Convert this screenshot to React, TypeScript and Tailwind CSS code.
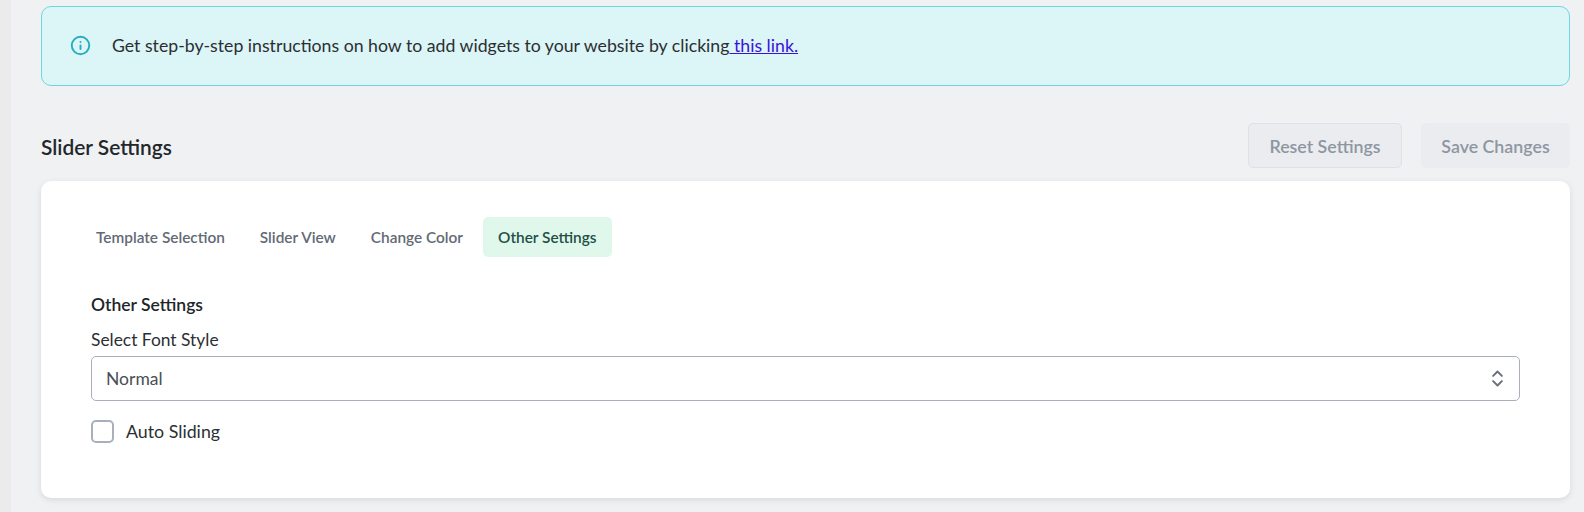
import { ChevronsUpDown, Info } from "lucide-react";

const tabs = ["Template Selection", "Slider View", "Change Color", "Other Settings"];

function App() {
  return (
    <div className="flex h-[512px] overflow-hidden bg-[#f0f1f3] font-['Lato',sans-serif] text-[#212529]">
      <div className="w-[11px] shrink-0 bg-[#ebebeb]" />
      <div className="flex-1 pl-[30px] pr-[14px] pt-[6px]">
        <div className="flex h-[80px] items-center rounded-[10px] border border-[#6dd6e2] bg-[#dcf5f7] pl-[28px]">
          <Info className="-mt-[2px] h-[21px] w-[21px] text-[#25adc0]" strokeWidth={2.2} />
          <p className="ml-[21px] text-[17.7px] text-[#2b2f33]">
            Get step-by-step instructions on how to add widgets to your website by clicking
            <a className="text-[#3a12d8] underline"> this link.</a>
          </p>
        </div>

        <div className="mt-[37px] flex h-[45px] items-center justify-between">
          <h2 className="pt-[3px] text-[20.9px] font-semibold text-[#23272b]">Slider Settings</h2>
          <div className="flex gap-[19px]">
            <button className="h-[45px] w-[154px] rounded-[5px] border border-[#dfe1e5] bg-[#ebecf0] pt-[2px] text-[17.8px] font-semibold text-[#8d96a1]">
              Reset Settings
            </button>
            <button className="h-[45px] w-[149px] rounded-[5px] bg-[#ebecf0] pt-[2px] text-[17.8px] font-semibold text-[#8d96a1]">
              Save Changes
            </button>
          </div>
        </div>

        <div className="mt-[13px] h-[317px] rounded-[10px] bg-white pl-[50px] pr-[50px] pt-[36px] shadow-[0_2px_6px_rgba(0,0,0,0.1)]">
          <div className="-ml-[10px] flex gap-[5px]">
            {tabs.map((tab, i) => (
              <button
                key={tab}
                className={
                  i === 3
                    ? "h-[40px] rounded-[5px] bg-[#e0f7ec] px-[15px] pt-[1px] text-[15.4px] font-semibold text-[#1f4f45]"
                    : "h-[40px] rounded-[5px] px-[15px] pt-[1px] text-[15.4px] font-semibold text-[#626a75]"
                }
              >
                {tab}
              </button>
            ))}
          </div>

          <h3 className="mt-[36px] text-[17.5px] font-semibold leading-[24px] text-[#212529]">Other Settings</h3>
          <label className="mt-[11px] block text-[17.4px] leading-[24px] text-[#2b2f33]">Select Font Style</label>
          <div className="mt-[4px] flex h-[45px] items-center justify-between rounded-[5px] border border-[#aab0bb] pl-[14px] pr-[11px] text-[17.5px] text-[#4a4f55]">
            <span className="pt-[2px]">Normal</span>
            <ChevronsUpDown className="h-[21px] w-[21px] text-[#68707c]" strokeWidth={2.2} />
          </div>
          <div className="mt-[17px] flex items-center">
            <span className="h-[23px] w-[23px] rounded-[5px] border-2 border-[#aab0bb]" />
            <span className="ml-[12px] text-[17.8px] text-[#2b2f33]">Auto Sliding</span>
          </div>
        </div>
      </div>
    </div>
  );
}

export default App;
